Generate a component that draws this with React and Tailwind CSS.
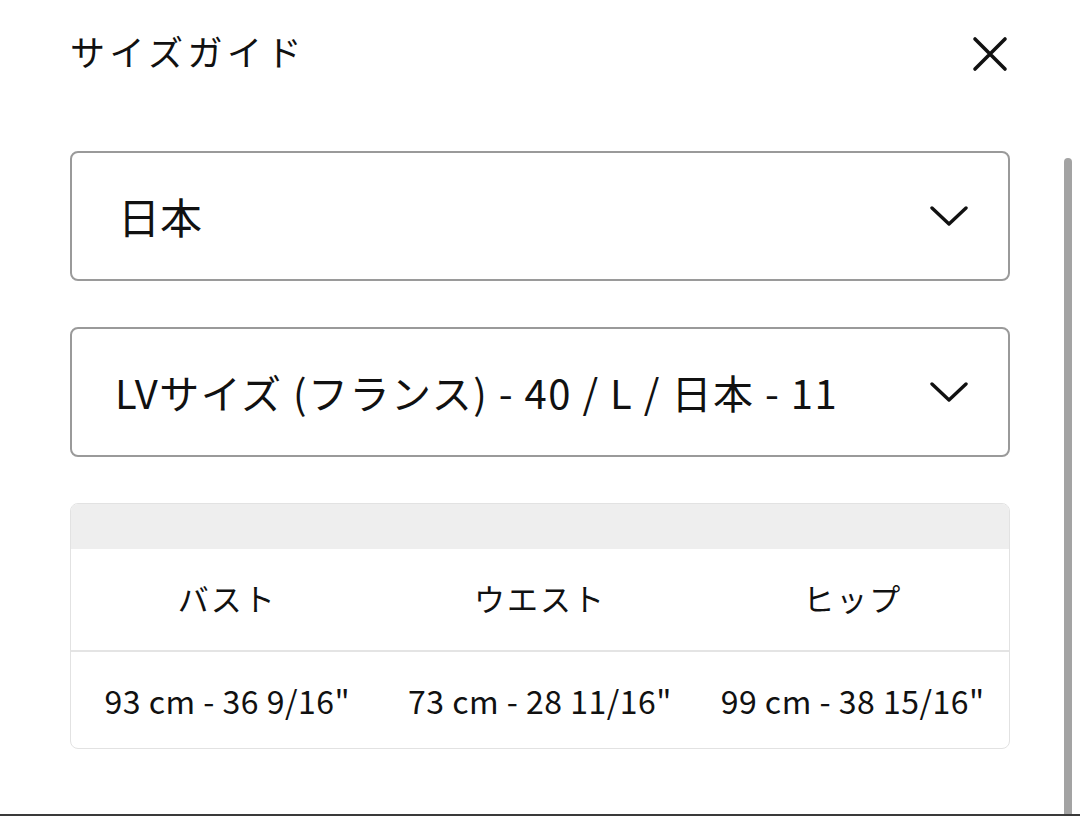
import { useState } from 'react';

const font = { fontFamily: '"Noto Sans CJK JP", "Noto Sans", sans-serif' };

function Chevron() {
    return (
        <svg width="38" height="20" viewBox="0 0 38 20" fill="none" className="shrink-0">
            <path d="M2 2 L19 18 L36 2" stroke="#111" strokeWidth="3.4" strokeLinecap="round" strokeLinejoin="round" />
        </svg>
    );
}

function SelectBox({ value, textClass, padClass }) {
    return (
        <div className={`flex h-[130px] items-center justify-between rounded-[8px] border-2 border-[#9a9a9a] bg-white pr-[40px] ${padClass}`}>
            <span className={textClass}>{value}</span>
            <Chevron />
        </div>
    );
}

export default function App() {
    const [country] = useState('日本');
    const [size] = useState('LVサイズ (フランス) - 40 / L / 日本 - 11');

    const columns = [
        { label: 'バスト', value: '93 cm - 36 9/16"' },
        { label: 'ウエスト', value: '73 cm - 28 11/16"' },
        { label: 'ヒップ', value: '99 cm - 38 15/16"' },
    ];

    return (
        <div className="relative h-[816px] w-[1080px] overflow-hidden bg-white text-[#111]" style={font}>
            {/* header */}
            <div className="flex items-start justify-between pl-[70px] pr-[72px] pt-[33px]">
                <h2 className="text-[35px] font-normal leading-none tracking-[4.5px]">サイズガイド</h2>
                <svg width="36" height="36" viewBox="0 0 36 36" className="mt-[3px]">
                    <path d="M3 3 L33 33 M33 3 L3 33" stroke="#111" strokeWidth="3.6" strokeLinecap="round" />
                </svg>
            </div>

            <div className="mx-[70px] mt-[79px] flex w-[940px] flex-col gap-[46px]">
                <SelectBox value={country} padClass="pl-[46px]" textClass="text-[42px] leading-none" />
                <SelectBox value={size} padClass="pl-[43px]" textClass="text-[40px] leading-none tracking-[1.5px]" />

                <div className="overflow-hidden rounded-[8px] border border-[#e2e2e2]">
                    <div className="h-[45px] bg-[#eeeeee]" />
                    <div className="grid h-[103px] grid-cols-3 items-center border-b-2 border-[#e4e4e4]">
                        {columns.map((c) => (
                            <div key={c.label} className="pb-[4px] text-center text-[31px] leading-none tracking-[2px]">
                                {c.label}
                            </div>
                        ))}
                    </div>
                    <div className="grid h-[96px] grid-cols-3 items-center">
                        {columns.map((c) => (
                            <div key={c.label} className="text-center text-[32px] leading-none tracking-[0.5px]">
                                {c.value}
                            </div>
                        ))}
                    </div>
                </div>
            </div>

            {/* scrollbar */}
            <div className="absolute right-[8px] top-[158px] bottom-0 w-[8px] rounded-t-full bg-[#a3a3a3]" />
            <div className="absolute bottom-0 left-0 right-0 h-[2px] bg-[#3a3a3a]" />
        </div>
    );
}
